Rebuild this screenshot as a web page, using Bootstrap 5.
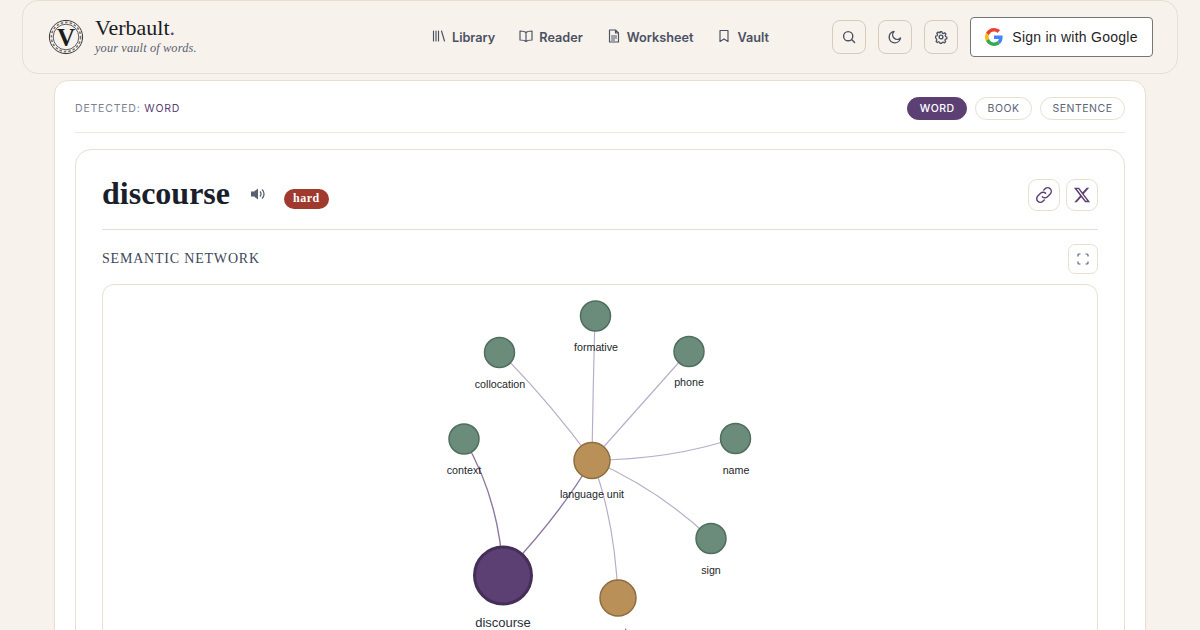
<!DOCTYPE html>
<html lang="en">
<head>
    <meta charset="UTF-8">
    <meta name="viewport" content="width=device-width, initial-scale=1">
    <title>Verbault</title>
    <link href="https://cdn.jsdelivr.net/npm/bootstrap@5.3.2/dist/css/bootstrap.min.css" rel="stylesheet">
    <script src="https://cdn.jsdelivr.net/npm/bootstrap@5.3.2/dist/js/bootstrap.bundle.min.js"></script>
    <style>
        html, body { overflow: hidden; height: 630px; }
        body { background: #f7f2ec; font-family: Inter, sans-serif; color: #1f2430; }
        .site-head {
            height: 74px; margin: 0 22px; padding: 0 24px 0 25px;
            border: 1px solid #e8dfd2; border-radius: 16px;
            background: #f7f2ec;
        }
        .brand-side { flex: 1 1 0; gap: 11px; }
        .brand-name { font-family: "Liberation Serif", serif; font-size: 22px; line-height: 24px; color: #1a1c24; margin-top: -3px; margin-bottom: 1px; }
        .brand-name span { color: #5c3f73; }
        .brand-sub { font-family: "Liberation Serif", serif; font-style: italic; font-size: 12.3px; line-height: 15px; color: #5a6272; letter-spacing: .15px; }
        .main-links { gap: 24px; padding-top: 1px; }
        .main-link { font-size: 12.7px; font-weight: 600; color: #4a5162; text-decoration: none; gap: 6px; }
        .main-link svg { width: 14px; height: 14px; margin-top: -2px; fill: none; stroke: #4a5162; stroke-width: 1.15; stroke-linecap: round; stroke-linejoin: round; }
        .tool-side { flex: 1 1 0; gap: 12px; }
        .tool-btn {
            width: 34px; height: 34px; padding: 0; border: 1px solid #d6ccbd; border-radius: 8px;
            background: transparent; color: #4a5162;
        }
        .tool-btn svg { width: 14px; height: 14px; fill: none; stroke: #4a5162; stroke-width: 1.4; stroke-linecap: round; stroke-linejoin: round; }
        .google-btn {
            width: 183px; height: 40px; padding: 0; gap: 9px; background: #fff; border: 1px solid #747775; border-radius: 4px;
            font-family: "Liberation Sans", sans-serif; font-size: 14px; letter-spacing: .25px; color: #1f1f1f;
        }
        .sheet {
            margin: 6px 54px 0; padding: 16px 20px 0; height: 700px; background: #fff;
            border: 1px solid #e8dfd2; border-radius: 14px;
        }
        .detect-row { height: 36px; border-bottom: 1px solid #f0e9de; padding-bottom: 12px; }
        .detect-label { font-size: 10.5px; letter-spacing: .8px; color: #7b8190; }
        .detect-label b { font-weight: 400; color: #5b3f73; }
        .mode-pill {
            height: 23px; padding: 0 11.5px; border-radius: 12px; border: 1px solid #e8dfd2;
            font-size: 10.5px; letter-spacing: .5px; color: #5d6474; background: #fff; line-height: 21px;
        }
        .mode-pill.is-on { background: #5c3f73; border-color: #5c3f73; color: #fff; font-weight: 500; }
        .word-card { margin-top: 16px; padding: 0 26px; border: 1px solid #e8dfd2; border-radius: 16px; height: 600px; }
        .word-top { height: 80px; padding-top: 10px; border-bottom: 1px solid #e5dfd6; }
        .word-title { font-family: "Liberation Serif", serif; font-weight: 700; font-size: 32px; line-height: 36px; color: #1a1f2b; margin: 0 0 4px; }
        .speak-icon { width: 16px; height: 16px; margin: 0 0 2px 20px; color: #5a6170; }
        .level-tag {
            margin-left: 18px; margin-top: 8px; height: 20px; padding: 0 9px; border-radius: 10px; background: #a0392e; color: #fff;
            font-family: "Liberation Serif", serif; font-weight: 700; font-size: 12px; line-height: 19px; letter-spacing: .5px;
        }
        .share-list { gap: 6px; }
        .share-btn { width: 32px; height: 32px; padding: 0; background: #fff; border: 1px solid #e8dfd2; border-radius: 9px; }
        .share-btn svg { width: 20px; height: 20px; }
        .share-btn .x-mark { width: 18px; height: 18px; }
        .net-row { height: 54px; padding-top: 4px; }
        .net-title { font-family: "Liberation Serif", serif; font-size: 14px; letter-spacing: .8px; color: #40485a; margin-bottom: 2px; }
        .expand-btn { width: 30px; height: 30px; padding: 0; background: #fff; border: 1px solid #e8dfd2; border-radius: 7px; }
        .net-box { height: 420px; border: 1px solid #e8dfd2; border-radius: 12px; overflow: hidden; }
        .net-box svg { display: block; }
        .net-box text { font-family: "Liberation Sans", sans-serif; font-size: 10.7px; fill: #1c1f2a; text-anchor: middle; }
        .net-box .lbl-main { font-size: 13px; fill: #2b2f3a; }
        .net-line { fill: none; stroke: #b9aec9; stroke-width: 1.2; }
        .net-line-on { fill: none; stroke: #8d789f; stroke-width: 1.4; }
        .dot-green { fill: #6b8c7a; stroke: #4f6e5e; stroke-width: 1.5; }
        .dot-tan { fill: #b89058; stroke: #8e6d3e; stroke-width: 1.5; }
        .dot-main { fill: #5c3f73; stroke: #452f58; stroke-width: 3; }
    </style>
</head>
<body>
    <header class="site-head d-flex align-items-center">
        <div class="brand-side d-flex align-items-center">
            <svg width="36" height="36" viewBox="0 0 36 36" class="flex-shrink-0">
                <circle cx="18" cy="18" r="16.600" fill="none" stroke="#3a3a3a" stroke-width="1"/>
                <circle cx="18" cy="18" r="14.600" fill="none" stroke="#777" stroke-width="1.600" stroke-dasharray="2.500 2"/>
                <circle cx="18" cy="18" r="12.800" fill="#f7f2ec" stroke="#3a3a3a" stroke-width=".8"/>
                <text x="18" y="26.500" text-anchor="middle" font-family="Liberation Serif, serif" font-weight="700" font-size="25" fill="#1c1c1c">V</text>
            </svg>
            <div>
                <div class="brand-name">Verbault<span>.</span></div>
                <div class="brand-sub">your vault of words.</div>
            </div>
        </div>
        <nav class="main-links d-flex align-items-center">
            <a class="main-link d-flex align-items-center" href="#">
                <svg viewBox="0 0 14 14"><path d="M1.500 2v10M4 2v10M6.500 2v10M9.500 2l3 10"/></svg>Library</a>
            <a class="main-link d-flex align-items-center" href="#">
                <svg viewBox="0 0 14 14"><path d="M7 3.500C6 2.500 4 2 1 2v9c3 0 5 .5 6 1.500 1-1 3-1.500 6-1.500V2c-3 0-5 .5-6 1.500zM7 3.500v9"/></svg>Reader</a>
            <a class="main-link d-flex align-items-center" href="#">
                <svg viewBox="0 0 14 14"><path d="M8.500 1H2.500v12h9V4zM8.500 1v3h3M4.500 7h5M4.500 9h5M4.500 11h3"/></svg>Worksheet</a>
            <a class="main-link d-flex align-items-center" href="#">
                <svg viewBox="0 0 14 14"><path d="M3 1.500h8v11l-4-2.600-4 2.600z"/></svg>Vault</a>
        </nav>
        <div class="tool-side d-flex align-items-center justify-content-end">
            <button class="tool-btn btn d-flex align-items-center justify-content-center"><svg viewBox="0 0 14 14"><circle cx="6.200" cy="6.200" r="4.600"/><path d="M9.600 9.600l3 3"/></svg></button>
            <button class="tool-btn btn d-flex align-items-center justify-content-center"><svg viewBox="0 0 14 14"><path d="M12.500 8A5.700 5.700 0 1 1 6 1.500 4.500 4.500 0 0 0 12.500 8z"/></svg></button>
            <button class="tool-btn btn d-flex align-items-center justify-content-center"><svg viewBox="0 0 14 14"><circle cx="7" cy="7" r="1.900"/><path d="M6 1h2l.4 1.700 1.200.5 1.500-.9 1.400 1.400-.9 1.500.5 1.200 1.400.6v2l-1.700.4-.5 1.200.9 1.500-1.400 1.400-1.500-.9-1.200.5-.4 1.400H6l-.4-1.700-1.200-.5-1.500.9-1.400-1.400.9-1.500-.5-1.200L1 8V6l1.700-.4.5-1.200-.9-1.500 1.400-1.400 1.500.9 1.200-.5z" transform="translate(.7 .7) scale(.9)"/></svg></button>
            <button class="google-btn btn d-flex align-items-center justify-content-center">
                <svg width="18" height="18" viewBox="0 0 48 48"><path fill="#EA4335" d="M24 9.500c3.500 0 6.700 1.200 9.200 3.600l6.900-6.900C35.900 2.400 30.400 0 24 0 14.600 0 6.500 5.400 2.600 13.200l8 6.200C12.500 13.700 17.800 9.500 24 9.500z"/><path fill="#4285F4" d="M46.900 24.500c0-1.600-.1-3.100-.4-4.500H24v9h12.900c-.6 3-2.200 5.500-4.700 7.200l7.700 6c4.500-4.200 7-10.300 7-17.700z"/><path fill="#FBBC05" d="M10.500 28.600c-.5-1.400-.8-3-.8-4.600s.3-3.200.8-4.600l-8-6.200C.9 16.500 0 20.100 0 24s.9 7.500 2.600 10.800l7.900-6.200z"/><path fill="#34A853" d="M24 48c6.500 0 11.900-2.100 15.900-5.800l-7.700-6c-2.200 1.400-4.900 2.300-8.200 2.300-6.200 0-11.500-4.200-13.400-9.900l-8 6.200C6.500 42.600 14.600 48 24 48z"/></svg>
                Sign in with Google
            </button>
        </div>
    </header>

    <main class="sheet">
        <div class="detect-row d-flex justify-content-between align-items-center">
            <span class="detect-label">DETECTED: <b>WORD</b></span>
            <div class="d-flex gap-2">
                <span class="mode-pill is-on">WORD</span>
                <span class="mode-pill">BOOK</span>
                <span class="mode-pill">SENTENCE</span>
            </div>
        </div>
        <section class="word-card">
            <div class="word-top d-flex align-items-center">
                <h1 class="word-title">discourse</h1>
                <svg class="speak-icon" viewBox="0 0 16 16"><path fill="currentColor" d="M1 5.500h3L8 2.500v11l-4-3H1z"/><path fill="none" stroke="currentColor" stroke-width="1.300" d="M10 5.500a3.500 3.500 0 0 1 0 5M12 3.500a6 6 0 0 1 0 9"/></svg>
                <span class="level-tag">hard</span>
                <div class="share-list ms-auto d-flex">
                    <button class="share-btn btn d-flex align-items-center justify-content-center"><svg viewBox="0 0 18 18" fill="none" stroke="#5c3f73" stroke-width="1.300" stroke-linecap="round"><path d="M7.500 10.500a3.200 3.200 0 0 0 4.600 0l2.500-2.500a3.200 3.200 0 0 0-4.600-4.600L8.800 4.600"/><path d="M10.500 7.500a3.200 3.200 0 0 0-4.600 0L3.400 10a3.200 3.200 0 0 0 4.600 4.600l1.200-1.200"/></svg></button>
                    <button class="share-btn btn d-flex align-items-center justify-content-center"><svg class="x-mark" viewBox="0 0 24 24" fill="#5c3f73"><path d="M18.244 2.250h3.308l-7.227 8.260 8.502 11.240H16.170l-5.214-6.817L4.990 21.750H1.680l7.730-8.835L1.254 2.250H8.080l4.713 6.231zm-1.161 17.520h1.833L7.084 4.126H5.117z"/></svg></button>
                </div>
            </div>
            <div class="net-row d-flex justify-content-between align-items-center">
                <span class="net-title">SEMANTIC NETWORK</span>
                <button class="expand-btn btn d-flex align-items-center justify-content-center"><svg width="14" height="14" viewBox="0 0 14 14" fill="none" stroke="#5c5f8a" stroke-width="1.200"><path d="M2 4.500V3a1 1 0 0 1 1-1h1.500M9.500 2H11a1 1 0 0 1 1 1v1.500M12 9.500V11a1 1 0 0 1-1 1H9.500M4.500 12H3a1 1 0 0 1-1-1V9.500"/></svg></button>
            </div>
            <div class="net-box">
                <svg width="994" height="418" viewBox="103 285 994 418">
                    <path class="net-line" d="M592 460Q593 390 595 316"/>
                    <path class="net-line" d="M592 460Q548 400 500 352"/>
                    <path class="net-line" d="M592 460L689 351"/>
                    <path class="net-line" d="M592 460Q670 460 735 438"/>
                    <path class="net-line" d="M592 460Q660 490 711 539"/>
                    <path class="net-line" d="M592 460Q615 520 618 598"/>
                    <path class="net-line-on" d="M592 460Q560 515 503 575"/>
                    <path class="net-line-on" d="M464 439Q500 500 503 575"/>
                    <circle class="dot-green" cx="595.500" cy="316" r="15"/>
                    <circle class="dot-green" cx="499.500" cy="352.500" r="15"/>
                    <circle class="dot-green" cx="689" cy="351.500" r="15"/>
                    <circle class="dot-green" cx="464" cy="439" r="15"/>
                    <circle class="dot-green" cx="735.500" cy="438.500" r="15"/>
                    <circle class="dot-green" cx="711" cy="538.500" r="15"/>
                    <circle class="dot-tan" cx="592" cy="460.500" r="18"/>
                    <circle class="dot-tan" cx="618" cy="598" r="18"/>
                    <circle class="dot-main" cx="503" cy="575.500" r="28.500"/>
                    <text x="596" y="351">formative</text>
                    <text x="500" y="388">collocation</text>
                    <text x="689" y="386">phone</text>
                    <text x="464" y="474">context</text>
                    <text x="736" y="474">name</text>
                    <text x="711" y="574">sign</text>
                    <text x="592" y="498">language unit</text>
                    <text x="618" y="636">part</text>
                    <text class="lbl-main" x="503" y="627">discourse</text>
                </svg>
            </div>
        </section>
    </main>
</body>
</html>
